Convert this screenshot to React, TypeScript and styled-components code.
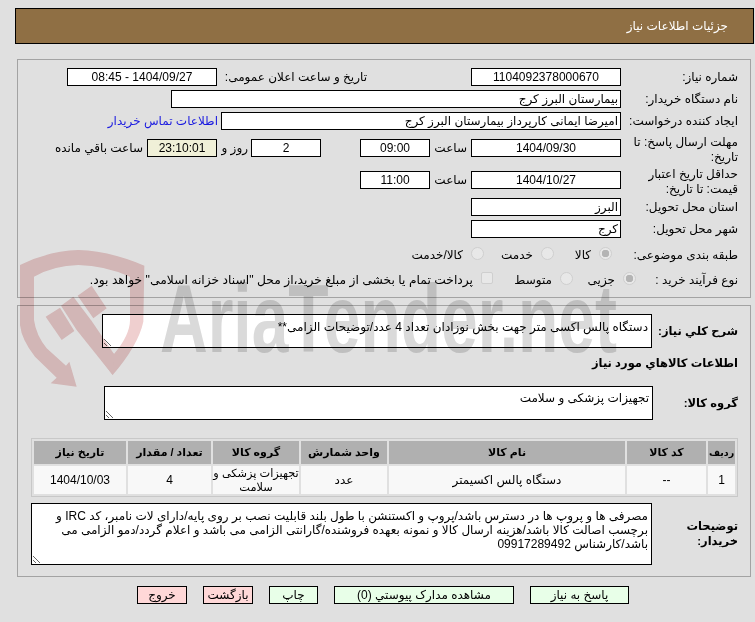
import React from "react";
import styled, { createGlobalStyle } from "styled-components";

const Global = createGlobalStyle`
  * { box-sizing: border-box; }
  html, body { margin: 0; padding: 0; background: #e0e0e0; }
  body {
    font-family: "Liberation Sans", "DejaVu Sans", sans-serif;
    font-size: 12px;
    color: #000;
  }
`;

const Page = styled.div`
  position: relative;
  width: 755px;
  height: 622px;
  overflow: hidden;
  direction: rtl;
  padding-top: 8px;
`;

const Header = styled.div`
  height: 36px;
  margin: 0 1px 0 0;
  width: 739px;
  background: #8f6f44;
  border: 1px solid #000;
  color: #fff;
  display: flex;
  align-items: center;
  padding-right: 25px;
`;

const Panel = styled.div<{ $mt: number; $h: number }>`
  width: 734px;
  height: ${(p) => p.$h}px;
  margin: ${(p) => p.$mt}px 4px 0 0;
  border: 1px solid #a3a3a3;
  padding: 8px 12px 0 0;
`;

const Row = styled.div<{ $mt?: number }>`
  display: flex;
  align-items: center;
  height: 18px;
  margin-top: ${(p) => p.$mt ?? 4}px;
`;

const Label = styled.div<{ $w: number; $two?: boolean }>`
  flex: none;
  width: ${(p) => p.$w}px;
  line-height: 15px;
  ${(p) => (p.$two ? "height: 30px; margin-top: 4px;" : "")}
`;

const Text = styled.span<{ $w?: number; $mr?: number }>`
  flex: none;
  white-space: nowrap;
  ${(p) => (p.$w ? `width: ${p.$w}px;` : "")}
  margin-right: ${(p) => p.$mr ?? 0}px;
`;

const Field = styled.input<{ $w: number; $mr?: number; $center?: boolean; $bg?: string }>`
  flex: none;
  width: ${(p) => p.$w}px;
  height: 18px;
  margin: 0 ${(p) => p.$mr ?? 0}px 0 0;
  padding: 0 2px;
  border: 1px solid #000;
  border-radius: 0;
  outline: none;
  background: ${(p) => p.$bg ?? "#fff"};
  font: inherit;
  color: #000;
  text-align: ${(p) => (p.$center ? "center" : "right")};
`;

const Link = styled.a<{ $mr: number }>`
  color: #1a1ae0;
  text-decoration: none;
  white-space: nowrap;
  margin-right: ${(p) => p.$mr}px;
`;

const Choice = styled.label<{ $w?: number; $fs?: number }>`
  flex: none;
  display: flex;
  align-items: center;
  gap: 8px;
  white-space: nowrap;
  ${(p) => (p.$w ? `width: ${p.$w}px;` : "")}
  ${(p) => (p.$fs ? `font-size: ${p.$fs}px;` : "")}
`;

const Radio = styled.input.attrs({ type: "radio", disabled: true })`
  appearance: none;
  flex: none;
  width: 13px;
  height: 13px;
  margin: -3px 0 0 0;
  border: 1px solid #cfcfcf;
  border-radius: 50%;
  background: #e8e8e8;
  &:checked {
    background: radial-gradient(circle, #b4b4b4 0 3.5px, #e8e8e8 4px);
  }
`;

const Check = styled.input.attrs({ type: "checkbox", disabled: true })`
  appearance: none;
  flex: none;
  width: 12px;
  height: 12px;
  margin: -5px 0 0 0;
  border: 1px solid #cfcfcf;
  border-radius: 2px;
  background: #e8e8e8;
`;

const BoldLabel = styled.div<{ $w: number }>`
  flex: none;
  width: ${(p) => p.$w}px;
  font-size: 11.5px;
  font-weight: bold;
  line-height: 15px;
`;

const AreaRow = styled.div<{ $mt?: number; $h: number }>`
  display: flex;
  align-items: center;
  height: ${(p) => p.$h}px;
  margin-top: ${(p) => p.$mt ?? 0}px;
`;

const Area = styled.textarea<{ $w: number; $pt: number }>`
  flex: none;
  display: block;
  width: ${(p) => p.$w}px;
  height: 100%;
  margin: 0;
  padding: ${(p) => p.$pt}px 3px 0 3px;
  border: 1px solid #000;
  border-radius: 0;
  outline: none;
  overflow: hidden;
  resize: both;
  background: #fff;
  font: inherit;
  line-height: 14px;
  color: #000;
`;

const Heading = styled.div`
  height: 16px;
  margin-top: 7px;
  font-size: 11.5px;
  font-weight: bold;
  line-height: 16px;
`;

const Table = styled.table`
  width: 707px;
  margin-top: 18px;
  border: 1px solid #c8c8c8;
  border-spacing: 2px;
  table-layout: fixed;
`;

const Th = styled.th<{ $w: number; $fs?: number }>`
  width: ${(p) => p.$w}px;
  height: 23px;
  padding: 0;
  background: #b0b0b0;
  font-size: ${(p) => p.$fs ?? 11}px;
  font-weight: bold;
  white-space: nowrap;
  text-align: center;
`;

const Td = styled.td`
  height: 28px;
  padding: 0;
  background: #f8f8f8;
  line-height: 14px;
  text-align: center;
`;

const WrappedCell = styled(Td)`
  font-size: 11.3px;
  white-space: nowrap;
`;

const Footer = styled.div`
  display: flex;
  gap: 16px;
  margin: 9px 126px 0 0;
`;

const Button = styled.button<{ $w: number; $danger?: boolean }>`
  width: ${(p) => p.$w}px;
  height: 18px;
  padding: 0;
  border: 1px solid #000;
  border-radius: 0;
  background: ${(p) => (p.$danger ? "#ffd8d8" : "#e8ffe8")};
  font: inherit;
  color: #000;
`;

const Mark = styled.svg`
  position: absolute;
  left: 10px;
  top: 245px;
  width: 145px;
  height: 145px;
  mix-blend-mode: multiply;
  pointer-events: none;
`;

const Word = styled.svg`
  position: absolute;
  left: 155px;
  top: 265px;
  width: 470px;
  height: 95px;
  mix-blend-mode: multiply;
  pointer-events: none;
`;

const Watermark = () => (
  <>
    <Mark viewBox="0 0 435 435">
      <g fill="#efcfcf">
        <path d="M30 60 Q115 18 205 15 Q300 18 403 62 L400 230 Q385 300 308 390 L240 300 L290 310 L312 327 Q360 270 360 225 L360 95 Q285 62 205 60 Q130 62 72 95 L72 225 Q78 270 110 310 L168 362 L178 350 L200 425 L122 415 L140 398 L75 335 Q35 285 30 240 Z" />
        <path d="M107 215 L150 188 L193 258 L155 285 Z" />
        <path d="M153 182 L190 155 L245 228 L312 327 L308 390 L200 255 Z" />
        <path d="M203 152 L245 122 L290 190 L250 220 Z" />
      </g>
    </Mark>
    <Word viewBox="0 0 470 95">
      <text
        x="5"
        y="87"
        textLength="457"
        lengthAdjust="spacingAndGlyphs"
        fontFamily="'Liberation Sans', sans-serif"
        fontWeight="bold"
        fontSize="96"
        fill="#dadada"
        direction="ltr"
      >
        AriaTender.net
      </text>
    </Word>
  </>
);

export default function App() {
  return (
    <Page>
      <Global />
      <Header>جزئیات اطلاعات نیاز</Header>

      <Panel $mt={15} $h={239}>
        <Row $mt={0}>
          <Label $w={117}>شماره نیاز:</Label>
          <Field $w={150} $center readOnly value="1104092378000670" />
          <Text $w={150} $mr={104}>تاریخ و ساعت اعلان عمومی:</Text>
          <Field $w={150} $center readOnly value="1404/09/27 - 08:45" />
        </Row>
        <Row>
          <Label $w={117}>نام دستگاه خریدار:</Label>
          <Field $w={450} readOnly value="بیمارستان البرز کرج" />
        </Row>
        <Row>
          <Label $w={117}>ایجاد کننده درخواست:</Label>
          <Field $w={400} readOnly value="امیرضا ایمانی کارپرداز بیمارستان البرز کرج" />
          <Link $mr={3} href="#">اطلاعات تماس خریدار</Link>
        </Row>
        <Row $mt={9}>
          <Label $w={117} $two>مهلت ارسال پاسخ: تا تاریخ:</Label>
          <Field $w={150} $center readOnly value="1404/09/30" />
          <Text $w={34} $mr={4}>ساعت</Text>
          <Field $w={70} $mr={3} $center readOnly value="09:00" />
          <Field $w={70} $mr={39} $center readOnly value="2" />
          <Text $w={27} $mr={3}>روز و</Text>
          <Field $w={70} $mr={4} $center $bg="#f0f0d8" readOnly value="23:10:01" />
          <Text $mr={4}>ساعت باقي مانده</Text>
        </Row>
        <Row $mt={14}>
          <Label $w={117} $two>حداقل تاریخ اعتبار قیمت: تا تاریخ:</Label>
          <Field $w={150} $center readOnly value="1404/10/27" />
          <Text $w={34} $mr={4}>ساعت</Text>
          <Field $w={70} $mr={3} $center readOnly value="11:00" />
        </Row>
        <Row $mt={9}>
          <Label $w={117}>استان محل تحویل:</Label>
          <Field $w={150} readOnly value="البرز" />
        </Row>
        <Row>
          <Label $w={117}>شهر محل تحویل:</Label>
          <Field $w={150} readOnly value="کرج" />
        </Row>
        <Row $mt={8}>
          <Label $w={126}>طبقه بندی موضوعی:</Label>
          <Choice $w={58}><Radio checked readOnly />کالا</Choice>
          <Choice $w={70}><Radio />خدمت</Choice>
          <Choice><Radio />کالا/خدمت</Choice>
        </Row>
        <Row $mt={7}>
          <Label $w={102}>نوع فرآیند خرید :</Label>
          <Choice $w={63}><Radio checked readOnly />جزیی</Choice>
          <Choice $w={80}><Radio />متوسط</Choice>
          <Choice $fs={12.3}><Check />پرداخت تمام یا بخشی از مبلغ خرید،از محل "اسناد خزانه اسلامی" خواهد بود.</Choice>
        </Row>
      </Panel>

      <Panel $mt={7} $h={272}>
        <AreaRow $h={34}>
          <BoldLabel $w={86}>شرح كلي نیاز:</BoldLabel>
          <Area $w={550} $pt={5} readOnly value="دستگاه پالس اکسی متر جهت بخش نوزادان تعداد 4 عدد/توضیحات الزامی**" />
        </AreaRow>
        <Heading>اطلاعات كالاهاي مورد نیاز</Heading>
        <AreaRow $mt={15} $h={34}>
          <BoldLabel $w={85}>گروه کالا:</BoldLabel>
          <Area $w={549} $pt={4} readOnly value="تجهیزات پزشکی و سلامت" />
        </AreaRow>
        <Table>
          <thead>
            <tr>
              <Th $w={27} $fs={9.5}>ردیف</Th>
              <Th $w={79}>کد کالا</Th>
              <Th $w={236}>نام کالا</Th>
              <Th $w={86}>واحد شمارش</Th>
              <Th $w={86}>گروه کالا</Th>
              <Th $w={83}>تعداد / مقدار</Th>
              <Th $w={92}>تاریخ نیاز</Th>
            </tr>
          </thead>
          <tbody>
            <tr>
              <Td>1</Td>
              <Td>--</Td>
              <Td>دستگاه پالس اکسیمتر</Td>
              <Td>عدد</Td>
              <WrappedCell>تجهیزات پزشکی و<br />سلامت</WrappedCell>
              <Td>4</Td>
              <Td>1404/10/03</Td>
            </tr>
          </tbody>
        </Table>
        <AreaRow $mt={6} $h={62}>
          <BoldLabel $w={86}>توضیحات خریدار:</BoldLabel>
          <Area
            $w={621}
            $pt={5}
            readOnly
            value="مصرفی ها و پروپ ها در دسترس باشد/پروپ و اکستنشن با طول بلند قابلیت نصب بر روی پایه/دارای لات نامبر، کد IRC و برچسب اصالت کالا باشد/هزینه ارسال کالا و نمونه بعهده فروشنده/گارانتی الزامی می باشد و اعلام گردد/دمو الزامی می باشد/کارشناس 09917289492"
          />
        </AreaRow>
      </Panel>

      <Footer>
        <Button $w={99}>پاسخ به نیاز</Button>
        <Button $w={180}>مشاهده مدارک پیوستي (0)</Button>
        <Button $w={49}>چاپ</Button>
        <Button $w={50} $danger>بازگشت</Button>
        <Button $w={50} $danger>خروج</Button>
      </Footer>

      <Watermark />
    </Page>
  );
}
